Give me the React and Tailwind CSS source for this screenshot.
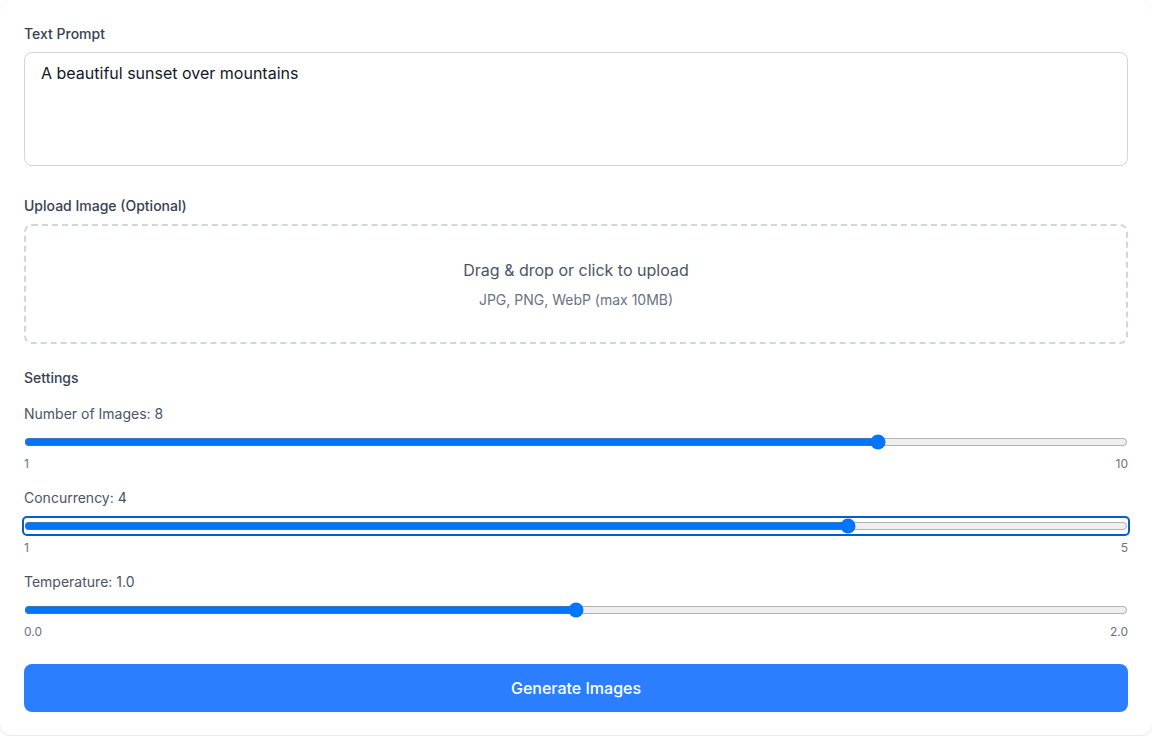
import { useState } from 'react';

const Slider = ({ label, value, min, max, step, minLabel, maxLabel, focused, onChange }) => (
    <div>
        <label className="block text-sm text-gray-600 mb-2.5">
            {label}: {value}
        </label>
        <input
            type="range"
            min={min}
            max={max}
            step={step}
            value={value}
            onChange={onChange}
            className={
                focused
                    ? "block w-full h-4 accent-[#0075ff] outline-2 outline-solid outline-[#005fcc] rounded-[3px]"
                    : "block w-full h-4 accent-[#0075ff]"
            }
        />
        <div className="flex justify-between text-xs text-gray-500 mt-1.5">
            <span>{minLabel}</span>
            <span>{maxLabel}</span>
        </div>
    </div>
);

export default function App() {
    const [prompt, setPrompt] = useState("A beautiful sunset over mountains");
    const [count, setCount] = useState(8);
    const [concurrency, setConcurrency] = useState(4);
    const [temperature, setTemperature] = useState(1.0);

    return (
        <div className="min-h-screen bg-white font-['Inter','Liberation_Sans',sans-serif]">
            <div className="bg-white rounded-xl shadow-[0_1px_3px_rgba(0,0,0,0.12)] p-6 w-full h-[735px]">
                <label className="block text-sm font-medium text-gray-700 mb-2">Text Prompt</label>
                <textarea
                    value={prompt}
                    onChange={(e) => setPrompt(e.target.value)}
                    className="block w-full h-[114px] resize-none border border-gray-300 rounded-lg px-4 pt-2 pb-3 text-base text-gray-900 focus:outline-none"
                />

                <label className="block text-sm font-medium text-gray-700 mt-[30px] mb-2">Upload Image (Optional)</label>
                <div className="border-2 border-dashed border-gray-300 rounded-lg p-8 text-center cursor-pointer">
                    <p className="text-base text-gray-600">Drag &amp; drop or click to upload</p>
                    <p className="text-sm text-gray-500 mt-2">JPG, PNG, WebP (max 10MB)</p>
                </div>

                <h3 className="text-sm font-medium text-gray-700 mt-6 mb-4">Settings</h3>
                <div className="space-y-4">
                    <Slider
                        label="Number of Images"
                        value={count}
                        min={1}
                        max={10}
                        step={1}
                        minLabel="1"
                        maxLabel="10"
                        onChange={(e) => setCount(Number(e.target.value))}
                    />
                    <Slider
                        label="Concurrency"
                        value={concurrency}
                        min={1}
                        max={5}
                        step={1}
                        minLabel="1"
                        maxLabel="5"
                        focused
                        onChange={(e) => setConcurrency(Number(e.target.value))}
                    />
                    <Slider
                        label="Temperature"
                        value={temperature.toFixed(1)}
                        min={0}
                        max={2}
                        step={0.1}
                        minLabel="0.0"
                        maxLabel="2.0"
                        onChange={(e) => setTemperature(Number(e.target.value))}
                    />
                </div>

                <button className="mt-6 w-full bg-blue-500 text-white font-medium text-base py-3 rounded-lg">
                    Generate Images
                </button>
            </div>
        </div>
    );
}
